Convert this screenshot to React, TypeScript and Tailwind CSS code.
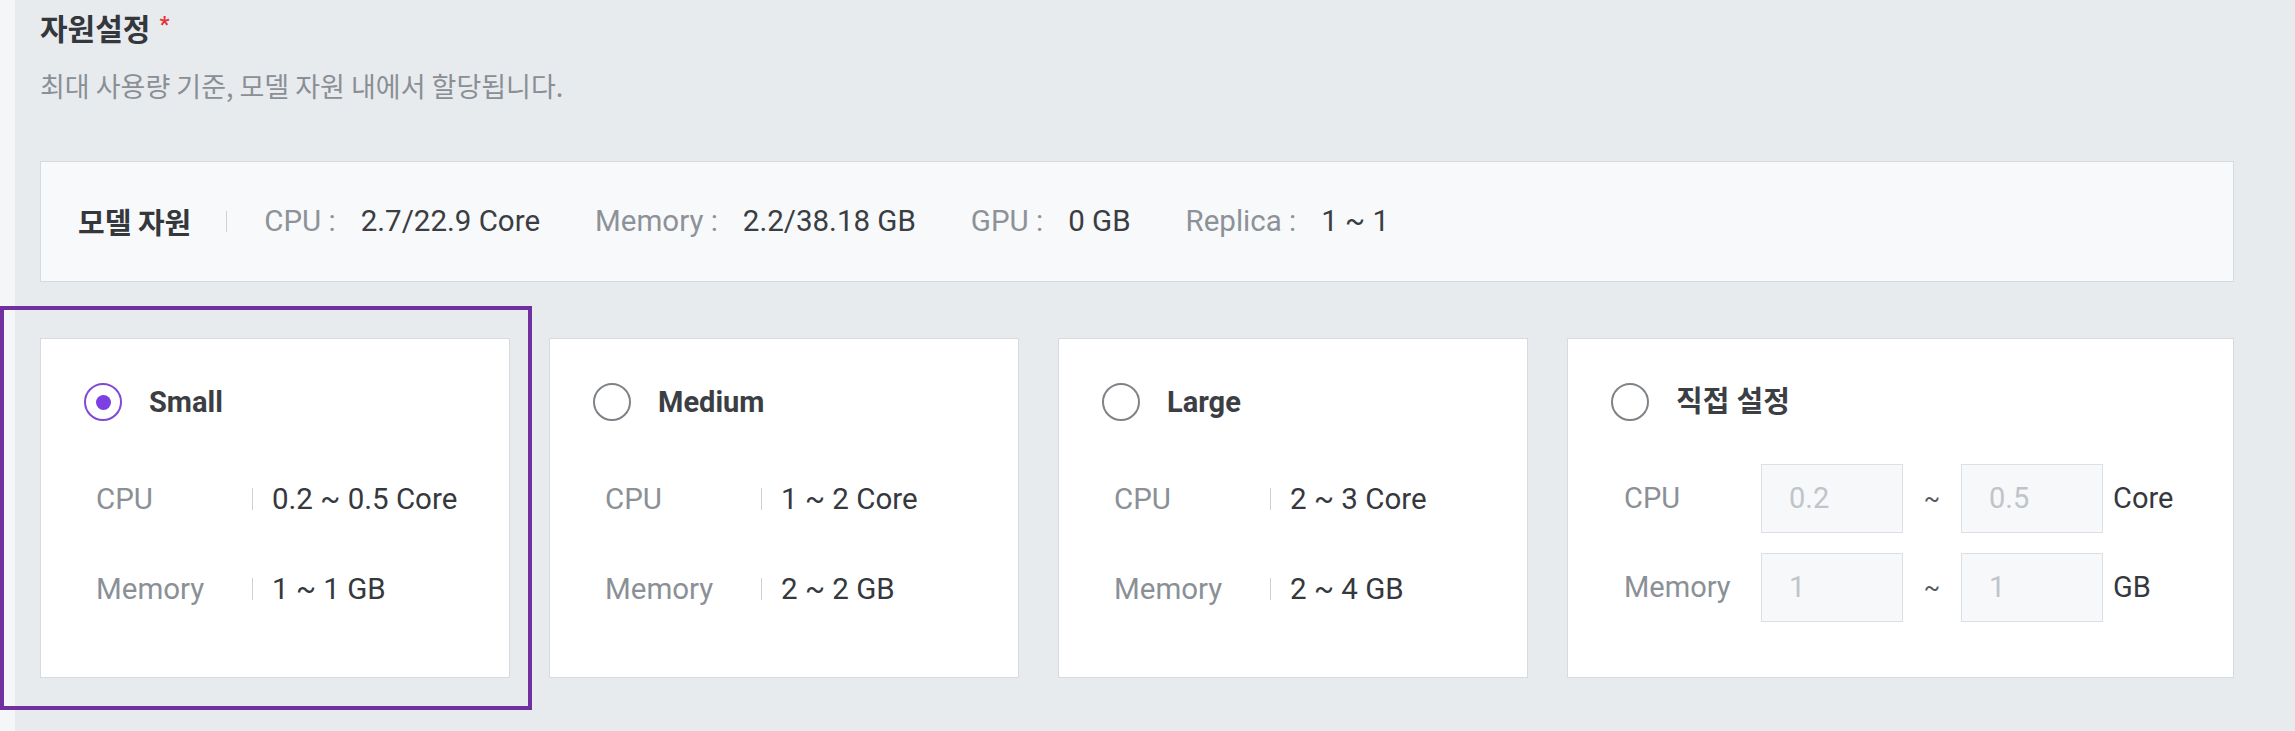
import React from 'react';

type Preset = {
  name: string;
  cpu: string;
  memory: string;
  checked?: boolean;
};

const presets: Preset[] = [
  { name: 'Small', cpu: '0.2 ~ 0.5 Core', memory: '1 ~ 1 GB', checked: true },
  { name: 'Medium', cpu: '1 ~ 2 Core', memory: '2 ~ 2 GB' },
  { name: 'Large', cpu: '2 ~ 3 Core', memory: '2 ~ 4 GB' },
];

const modelStats = [
  { label: 'CPU :', value: '2.7/22.9 Core' },
  { label: 'Memory :', value: '2.2/38.18 GB' },
  { label: 'GPU :', value: '0 GB' },
  { label: 'Replica :', value: '1 ~ 1' },
];

function Radio({ checked }: { checked?: boolean }) {
  if (checked) {
    return (
      <span className="w-[38px] h-[38px] rounded-full border-2 border-[#8049d8] flex items-center justify-center shrink-0">
        <span className="w-[15px] h-[15px] rounded-full bg-[#7b3fe4]" />
      </span>
    );
  }
  return <span className="w-[38px] h-[38px] rounded-full border-2 border-[#7f8388] shrink-0" />;
}

function CardHeader({ name, checked }: { name: string; checked?: boolean }) {
  return (
    <div className="flex items-center h-[38px] gap-[27px]">
      <Radio checked={checked} />
      <span className="text-[29px] font-bold text-[#3b3e43] leading-none">{name}</span>
    </div>
  );
}

function SpecRow({ label, value }: { label: string; value: string }) {
  return (
    <div className="flex items-center h-[40px] pl-[12px]">
      <span className="w-[156px] text-[29.5px] text-[#8b9096]">{label}</span>
      <span className="w-px h-[22px] bg-[#cdd1d6]" />
      <span className="ml-[19px] text-[29.5px] text-[#35383d]">{value}</span>
    </div>
  );
}

function PresetCard({ preset }: { preset: Preset }) {
  return (
    <div className="w-[470px] h-[340px] shrink-0 bg-white border border-[#d7dbe0] pl-[43px] pt-[44px]">
      <CardHeader name={preset.name} checked={preset.checked} />
      <div className="mt-[58px] flex flex-col gap-[50px]">
        <SpecRow label="CPU" value={preset.cpu} />
        <SpecRow label="Memory" value={preset.memory} />
      </div>
    </div>
  );
}

function RangeInput({ value }: { value: string }) {
  return (
    <div className="w-[142px] h-[69px] bg-[#f7f8fa] border border-[#dcdfe3] flex items-center pl-[27px] text-[29px] text-[#c0c4c9]">
      {value}
    </div>
  );
}

function CustomRow({ label, min, max, unit }: { label: string; min: string; max: string; unit: string }) {
  return (
    <div className="flex items-center h-[69px] pl-[13px]">
      <span className="w-[137px] text-[29px] text-[#8b9096]">{label}</span>
      <RangeInput value={min} />
      <span className="w-[58px] text-center text-[24px] text-[#55595e]">~</span>
      <RangeInput value={max} />
      <span className="ml-[10px] text-[29px] text-[#35383d]">{unit}</span>
    </div>
  );
}

export default function App() {
  return (
    <div className="relative w-[2295px] h-[731px] overflow-hidden bg-[#f5f6f8] pl-[15px] font-[Roboto,'Noto_Sans_CJK_KR',sans-serif]">
      <div className="h-full bg-[#e8ebee] pl-[25px] pr-[61px] pt-[9px]">
        {/* header */}
        <div className="flex items-center h-[36px]">
          <h2 className="text-[30px] font-bold text-[#34373c] font-['Noto_Sans_CJK_KR',sans-serif]">자원설정</h2>
          <span className="ml-[9px] text-[22px] font-bold text-[#e0343a] -mt-[6px]">*</span>
        </div>
        <p className="mt-[24px] h-[34px] flex items-center text-[27px] text-[#8a8f95] font-['Noto_Sans_CJK_KR',sans-serif]">
          최대 사용량 기준, 모델 자원 내에서 할당됩니다.
        </p>

        {/* model resource summary */}
        <div className="mt-[58px] h-[121px] bg-[#f8f9fb] border border-[#d6dadf] flex items-center pl-[37px]">
          <span className="text-[29px] font-bold text-[#34373c] font-['Noto_Sans_CJK_KR',sans-serif]">모델 자원</span>
          <span className="ml-[35px] mr-[37px] w-px h-[21px] bg-[#cdd1d6]" />
          {modelStats.map((s, i) => (
            <div key={s.label} className={`flex items-center ${i > 0 ? 'ml-[55px]' : ''}`}>
              <span className="text-[29.5px] text-[#8d9298]">{s.label}</span>
              <span className="ml-[25px] text-[29.5px] text-[#3a3d42]">{s.value}</span>
            </div>
          ))}
        </div>

        {/* presets */}
        <div className="mt-[56px] flex gap-[39px]">
          {presets.map(p => (
            <PresetCard key={p.name} preset={p} />
          ))}
          <div className="flex-1 h-[340px] bg-white border border-[#d7dbe0] pl-[43px] pt-[44px]">
            <CardHeader name="직접 설정" />
            <div className="mt-[43px] flex flex-col gap-[20px]">
              <CustomRow label="CPU" min="0.2" max="0.5" unit="Core" />
              <CustomRow label="Memory" min="1" max="1" unit="GB" />
            </div>
          </div>
        </div>
      </div>

      {/* selection highlight */}
      <div className="absolute left-0 top-[306px] w-[532px] h-[404px] border-4 border-[#7030a0] pointer-events-none" />
    </div>
  );
}
